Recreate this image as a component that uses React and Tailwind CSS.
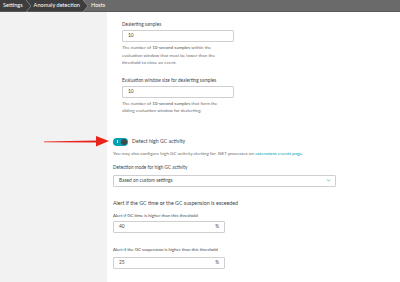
import { ChevronDown } from "lucide-react";

function TextInput({ value, suffix, width = "w-[112px]" }) {
  return (
    <div
      className={`${width} h-[12px] border border-[#cfcfcf] rounded-[1px] bg-white flex items-center justify-between pl-[5px] pr-[5px] text-[4.8px] text-[#454646]`}
    >
      <span>{value}</span>
      {suffix && <span>{suffix}</span>}
    </div>
  );
}

function Label({ children, className = "" }) {
  return (
    <div className={`text-[4.7px] leading-[6px] text-[#454646] ${className}`}>
      {children}
    </div>
  );
}

function Help({ children, className = "" }) {
  return (
    <div className={`text-[4.5px] leading-[7.5px] text-[#6d6d6d] ${className}`}>
      {children}
    </div>
  );
}

function Crumb({ children, dark }) {
  return (
    <div
      className={`h-full flex items-center px-[3px] ${
        dark ? "bg-[#3d3d3d]" : ""
      } text-white text-[5.6px]`}
    >
      {children}
    </div>
  );
}

function Sep({ fill }) {
  return (
    <svg width="5" height="12" viewBox="0 0 5 12" className="block">
      <polygon points="0,0 5,6 0,12" fill={fill} />
      <polyline
        points="0,0 5,6 0,12"
        fill="none"
        stroke="#9a9a9a"
        strokeWidth="0.7"
      />
    </svg>
  );
}

export default function App() {
  return (
    <div
      className="w-[400px] h-[282px] overflow-hidden bg-white flex flex-col"
      style={{ fontFamily: "Lato, 'Open Sans', sans-serif" }}
    >
      {/* breadcrumb bar */}
      <div className="h-[12px] bg-[#6a6a6a] border-b border-[#5a5a5a] flex items-center shrink-0">
        <Crumb dark>Settings</Crumb>
        <div className="bg-[#3d3d3d] h-full">
          <Sep fill="#3d3d3d" />
        </div>
        <Crumb dark>Anomaly detection</Crumb>
        <Sep fill="#3d3d3d" />
        <Crumb>Hosts</Crumb>
      </div>

      <div className="flex flex-1 relative">
        <aside className="w-[107px] bg-[#f2f2f2] shrink-0" />

        <main className="flex-1 pl-[6px]">
          <div className="pl-[9px] pt-[9px]">
            <Label>Dealerting samples</Label>
            <div className="mt-[3px]">
              <TextInput value="10" />
            </div>
            <Help className="mt-[2px]">
              The number of <b className="font-semibold">10-second samples</b> within the
              <br />
              evaluation window that must be lower than the
              <br />
              threshold to close an event.
            </Help>

            <Label className="mt-[10px]">
              Evaluation window size for dealerting samples
            </Label>
            <div className="mt-[3px]">
              <TextInput value="10" />
            </div>
            <Help className="mt-[2px]">
              The number of <b className="font-semibold">10-second samples</b> that form the
              <br />
              sliding evaluation window for dealerting.
            </Help>
          </div>

          <div className="flex items-center gap-[4px] mt-[23px]">
            <div className="w-[15px] h-[8px] rounded-full bg-[#00a1b2] flex items-center justify-between px-[1px]">
              <span className="w-[0.7px] h-[3px] bg-white ml-[2.5px]" />
              <span className="w-[6px] h-[6px] rounded-full bg-[#3f4a4c]" />
            </div>
            <span className="text-[5.2px] text-[#454646]">
              Detect high GC activity
            </span>
          </div>
          <div className="text-[4.6px] leading-[6px] text-[#6d6d6d] mt-[4px]">
            You may also configure high GC activity alerting for .NET processes
            on <span className="text-[#00a1b2]">extensions events page</span>.
          </div>

          <Label className="mt-[8px]">Detection mode for high GC activity</Label>
          <div className="mt-[5px] w-[223px] h-[12px] border border-[#cfcfcf] rounded-[1px] flex items-center justify-between pl-[5px] pr-[4px] text-[4.8px] text-[#454646]">
            <span>Based on custom settings</span>
            <ChevronDown size={5} strokeWidth={3} color="#00a1b2" />
          </div>

          <div className="text-[5.3px] leading-[7px] text-[#454646] mt-[13px]">
            Alert if the GC time <b className="font-semibold">or</b> the GC
            suspension is exceeded
          </div>
          <div className="text-[4.4px] leading-[6px] text-[#454646] mt-[6px]">
            Alert if GC time is higher than this threshold
          </div>
          <div className="mt-[2px]">
            <TextInput value="40" suffix="%" />
          </div>
          <div className="text-[4.4px] leading-[6px] text-[#454646] mt-[14px]">
            Alert if the GC suspension is higher than this threshold
          </div>
          <div className="mt-[4px]">
            <TextInput value="25" suffix="%" />
          </div>
        </main>

        {/* red annotation arrow */}
        <svg
          className="absolute left-[44px] top-[123px]"
          width="66"
          height="14"
          viewBox="0 0 66 14"
        >
          <polygon
            points="0,6.4 52,5.6 52,1 65,6 52,11.5 52,7.4 0,7.2"
            fill="#e8231c"
          />
        </svg>
      </div>
    </div>
  );
}
